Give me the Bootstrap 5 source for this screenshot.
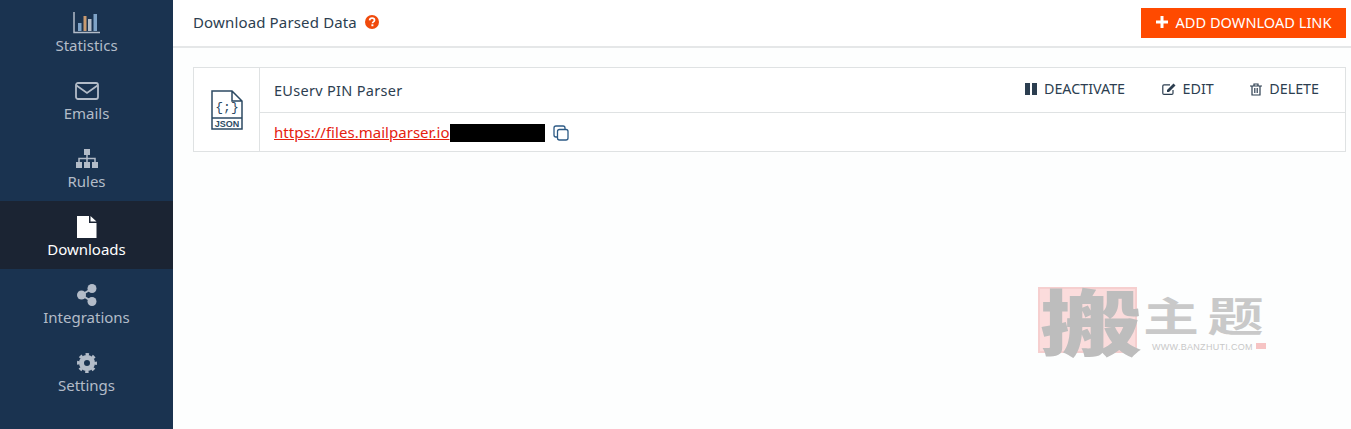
<!DOCTYPE html>
<html lang="en">
<head>
    <meta charset="UTF-8">
    <meta name="viewport" content="width=device-width, initial-scale=1.0">
    <title>Download Parsed Data</title>
    <link href="https://cdn.jsdelivr.net/npm/bootstrap@5.3.0/dist/css/bootstrap.min.css" rel="stylesheet">
    <style>
        html, body { height: 100%; overflow: hidden; }
        body {
            font-family: "Noto Sans", "Open Sans", sans-serif;
            font-size: 14px;
            color: #2c3e50;
            background: #fdfefe;
        }
        .app-shell { height: 429px; }
        .side-menu {
            width: 173px;
            background: #1a3350;
            overflow: hidden;
        }
        .side-list { margin-top: -3px; }
        .side-item {
            height: 68px;
            padding-top: 15px;
            color: #b3bcc8;
            font-size: 15px;
            line-height: 20px;
            text-decoration: none;
        }
        .side-item.is-active { background: #1b2433; color: #fff; }
        .side-icon { height: 22px; margin-bottom: 1px; }
        .page-head {
            height: 48px;
            background: #fff;
            border-bottom: 2px solid #e5e7e8;
            padding: 8px 5px 0 20px;
        }
        .head-title { height: 28px; font-size: 15px; line-height: 28px; letter-spacing: .15px; }
        .btn-add {
            background: #ff4a00;
            color: #fff;
            height: 30px;
            width: 205px;
            border: 0;
            border-radius: 0;
            font-size: 14.6px;
            line-height: 28px;
            padding: 0 0 2px;
        }
        .btn-add:hover { background: #ff4a00; color: #fff; }
        .link-box {
            margin: 19px 5px 0 20px;
            height: 85px;
            border: 1px solid #dfe2e3;
            background: #fff;
        }
        .box-icon { width: 66px; border-right: 1px solid #dfe2e3; }
        .box-top {
            height: 45px;
            border-bottom: 1px solid #dfe2e3;
            padding: 0 26px 0 14px;
            font-size: 14.5px;
        }
        .box-name { letter-spacing: .3px; padding-top: 2px; }
        .act-row { margin-bottom: 2px; }
        .box-bottom { padding-left: 14px; height: 39px; }
        .act-link {
            color: #2c3e50;
            text-decoration: none;
            font-size: 14.3px;
            gap: 7px;
        }
        .act-gap { margin-left: 36.5px; }
        .file-url { color: #e5210f; font-size: 15px; letter-spacing: .03px; }
        .url-mask { display: inline-block; width: 95px; height: 18px; background: #000; }
        .wm-box { position: absolute; left: 1038px; top: 287px; width: 230px; height: 68px; pointer-events: none; }
        .wm-square {
            position: absolute; left: 0; top: 0; width: 99px; height: 66px;
            background: #fbdcdc; border: 2px solid #f6cfcf;
        }
        .wm-big {
            position: absolute; left: 2px; top: -10px;
            font-family: "Noto Sans CJK SC", sans-serif; font-weight: 900;
            font-size: 72px; line-height: 84px; color: #bdbdbd;
            transform: scaleX(1.42); transform-origin: left top;
        }
        .wm-small {
            position: absolute; left: 105px; top: 5px;
            font-family: "Noto Sans CJK SC", sans-serif; font-weight: 700;
            font-size: 40px; line-height: 44px; color: #c9c9c9; letter-spacing: 6px; white-space: nowrap;
            transform: scaleX(1.4); transform-origin: left top;
        }
        .wm-url {
            position: absolute; left: 114px; top: 55px;
            font-family: "Liberation Sans", sans-serif;
            font-size: 9px; line-height: 10px; color: #c8c8c8; letter-spacing: .3px; white-space: nowrap;
        }
        .wm-dot { position: absolute; left: 218px; top: 56px; width: 10px; height: 6px; background: #f6c4c4; }
    </style>
</head>
<body>
    <div class="d-flex app-shell">
        <div class="side-menu flex-shrink-0">
            <div class="side-list d-flex flex-column">
                <a class="side-item d-flex flex-column align-items-center" href="#">
                    <svg class="side-icon" width="28" height="22" viewBox="0 0 28 22">
                        <path d="M1 0v20.500h26" fill="none" stroke="#b3bcc8" stroke-width="1.500"/>
                        <rect x="5" y="11" width="3.500" height="8" fill="#7fa3c7"/>
                        <rect x="10.500" y="4" width="3" height="15" fill="#c89a70"/>
                        <rect x="15" y="7" width="3.500" height="12" fill="#b3bcc8"/>
                        <rect x="20.500" y="2" width="3.500" height="17" fill="#7fa3c7"/>
                    </svg>
                    <span>Statistics</span>
                </a>
                <a class="side-item d-flex flex-column align-items-center" href="#">
                    <svg class="side-icon" width="24" height="22" viewBox="0 0 24 22">
                        <rect x="1" y="3" width="22" height="16" rx="2" fill="none" stroke="currentColor" stroke-width="1.800"/>
                        <path d="M1.500 5.500 12 13 22.500 5.500" fill="none" stroke="currentColor" stroke-width="1.800"/>
                    </svg>
                    <span>Emails</span>
                </a>
                <a class="side-item d-flex flex-column align-items-center" href="#">
                    <svg class="side-icon" width="24" height="22" viewBox="0 0 24 22">
                        <path d="M9 1h6v6H9zM1 14h6v6H1zM9 14h6v6H9zM17 14h6v6h-6z" fill="currentColor"/>
                        <path d="M12 7v7M4 14v-3.500h16V14" fill="none" stroke="currentColor" stroke-width="1.500"/>
                    </svg>
                    <span>Rules</span>
                </a>
                <a class="side-item is-active d-flex flex-column align-items-center" href="#">
                    <svg class="side-icon" width="20" height="22" viewBox="0 0 20 22">
                        <path d="M0 0h12v7h7.500v15H0zM13.500 0l6 5.500h-6z" fill="#fff"/>
                    </svg>
                    <span>Downloads</span>
                </a>
                <a class="side-item d-flex flex-column align-items-center" href="#">
                    <svg class="side-icon" width="20" height="22" viewBox="0 0 20 22">
                        <circle cx="15" cy="4.500" r="4.500" fill="currentColor"/>
                        <circle cx="15" cy="17.500" r="4.500" fill="currentColor"/>
                        <circle cx="4.500" cy="11" r="4.500" fill="currentColor"/>
                        <path d="M15 4.500 4.500 11 15 17.500" fill="none" stroke="currentColor" stroke-width="2"/>
                    </svg>
                    <span>Integrations</span>
                </a>
                <a class="side-item d-flex flex-column align-items-center" href="#">
                    <svg class="side-icon" width="20" height="22" viewBox="0 0 20 22">
                        <circle cx="10" cy="11" r="5.500" fill="none" stroke="currentColor" stroke-width="5"/>
                        <circle cx="10" cy="11" r="8.600" fill="none" stroke="currentColor" stroke-width="2.800" stroke-dasharray="3.400 3.355" stroke-dashoffset="1.700"/>
                    </svg>
                    <span>Settings</span>
                </a>
            </div>
        </div>

        <div class="flex-grow-1">
            <div class="page-head d-flex justify-content-between">
                <div class="head-title d-flex align-items-center gap-2">
                    <span>Download Parsed Data</span>
                    <svg width="14" height="14" viewBox="0 0 14 14">
                        <circle cx="7" cy="7" r="7" fill="#f04a0c"/>
                        <path d="M4.600 5.400C4.700 3.900 5.800 3.200 7.100 3.200c1.400 0 2.400.8 2.400 2 0 1.800-2 1.600-2 3" fill="none" stroke="#fff" stroke-width="1.700"/>
                        <rect x="6.400" y="9.300" width="2" height="1.900" fill="#fff"/>
                    </svg>
                </div>
                <button class="btn btn-add d-flex align-items-center justify-content-center gap-2" type="button">
                    <svg width="12" height="12" viewBox="0 0 12 12"><path d="M4.500 0h3v4.500H12v3H7.500V12h-3V7.500H0v-3h4.500z" fill="#fff"/></svg>
                    <span>ADD DOWNLOAD LINK</span>
                </button>
            </div>

            <div class="link-box d-flex">
                <div class="box-icon d-flex align-items-center justify-content-center flex-shrink-0">
                    <svg width="32" height="40" viewBox="0 0 32 40">
                        <path d="M1 1h20l10 10v28H1zM21 1v10h10M1 28h30" fill="none" stroke="#2c4a63" stroke-width="1.500"/>
                        <text x="16" y="21" text-anchor="middle" font-size="13" font-family="Liberation Mono, monospace" fill="#2c4a63">{;}</text>
                        <text x="16" y="37" text-anchor="middle" font-size="9" font-weight="700" font-family="Liberation Sans, sans-serif" fill="#2c4a63">JSON</text>
                    </svg>
                </div>
                <div class="flex-grow-1">
                    <div class="box-top d-flex align-items-center justify-content-between">
                        <span class="box-name">EUserv PIN Parser</span>
                        <div class="act-row d-flex align-items-center">
                            <a class="act-link d-flex align-items-center" href="#">
                                <svg width="12" height="12" viewBox="0 0 12 12"><path d="M0 0h5v12H0zM7 0h5v12H7z" fill="#2c3e50"/></svg>
                                DEACTIVATE
                            </a>
                            <a class="act-link act-gap d-flex align-items-center" href="#">
                                <svg width="14" height="12" viewBox="0 0 14 12">
                                    <path d="M11 7v3.200c0 .7-.5 1.200-1.200 1.200H2c-.7 0-1.200-.5-1.200-1.200V3c0-.7.5-1.200 1.200-1.200h6" fill="none" stroke="#2c3e50" stroke-width="1.200"/>
                                    <path d="M5 7l6.500-6.500 2 2L7 9H5z" fill="#2c3e50"/>
                                </svg>
                                EDIT
                            </a>
                            <a class="act-link act-gap d-flex align-items-center" href="#">
                                <svg width="12" height="13" viewBox="0 0 12 13">
                                    <path d="M0 3h12M4 3V1h4v2M2 3v9h8V3" fill="none" stroke="#2c3e50" stroke-width="1.200"/>
                                    <path d="M4.500 5v5M6 5v5M7.500 5v5" stroke="#2c3e50" stroke-width=".8"/>
                                </svg>
                                DELETE
                            </a>
                        </div>
                    </div>
                    <div class="box-bottom d-flex align-items-center">
                        <a class="file-url" href="#">https://files.mailparser.io</a><span class="url-mask"></span>
                        <svg class="ms-2" width="16" height="16" viewBox="0 0 16 16">
                            <rect x="4.500" y="4.500" width="10.500" height="10.500" rx="2" fill="#fff" stroke="#2c5a85" stroke-width="1.300"/>
                            <path d="M4.500 12H3c-1.100 0-2-.9-2-2V3c0-1.100.9-2 2-2h7c1.100 0 2 .9 2 2v1.500" fill="none" stroke="#2c5a85" stroke-width="1.300"/>
                        </svg>
                    </div>
                </div>
            </div>
        </div>
    </div>

    <div class="wm-box">
        <div class="wm-square"></div>
        <div class="wm-big">搬</div>
        <div class="wm-small">主题</div>
        <div class="wm-url">WWW.BANZHUTI.COM</div>
        <div class="wm-dot"></div>
    </div>

    <script src="https://cdn.jsdelivr.net/npm/bootstrap@5.3.0/dist/js/bootstrap.bundle.min.js"></script>
</body>
</html>
